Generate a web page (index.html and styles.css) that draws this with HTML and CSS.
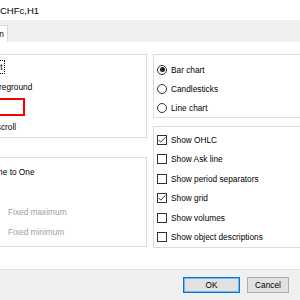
FILE: index.html
```html
<!DOCTYPE html>
<html lang="en">

<head>
    <meta charset="UTF-8">
    <title>CHFc,H1</title>
    <link rel="stylesheet" href="styles.css">
</head>

<body>

    <div class="titlebar"><span class="title">CHFc,H1</span></div>

    <div class="tabs">
        <div class="tab"><span>Common</span></div>
    </div>

    <div class="panel">
        <!-- columna izquierda, cortada por el borde de la ventana -->
        <div class="col col-left">
            <div class="group group-chart">
                <div class="row"><span class="box"></span><span class="label focus">Offline chart</span></div>
                <div class="row"><span class="box"></span><span class="label">Chart on foreground</span></div>
                <div class="row">
                    <span class="marked"><span class="box"></span><span class="label">Chart shift</span></span>
                </div>
                <div class="row"><span class="box"></span><span class="label">Chart autoscroll</span></div>
            </div>
            <div class="group group-scale">
                <div class="row"><span class="box"></span><span class="label">Scale fix One to One</span></div>
                <div class="row"><span class="box"></span><span class="label">Scale fix</span></div>
                <div class="row"><span class="label disabled fixed">Fixed maximum</span></div>
                <div class="row"><span class="label disabled fixed">Fixed minimum</span></div>
            </div>
        </div>

        <!-- columna derecha -->
        <div class="col col-right">
            <div class="group group-type">
                <div class="row"><span class="radio on"></span><span class="label">Bar chart</span></div>
                <div class="row"><span class="radio"></span><span class="label">Candlesticks</span></div>
                <div class="row"><span class="radio"></span><span class="label">Line chart</span></div>
            </div>
            <div class="group group-show">
                <div class="row">
                    <span class="box"><svg viewBox="0 0 10 10"><polyline points="1.5,4.8 3.8,7.2 8.3,2.3" /></svg></span>
                    <span class="label">Show OHLC</span>
                </div>
                <div class="row"><span class="box"></span><span class="label">Show Ask line</span></div>
                <div class="row"><span class="box"></span><span class="label">Show period separators</span></div>
                <div class="row">
                    <span class="box"><svg viewBox="0 0 10 10"><polyline points="1.5,4.8 3.8,7.2 8.3,2.3" /></svg></span>
                    <span class="label">Show grid</span>
                </div>
                <div class="row"><span class="box"></span><span class="label">Show volumes</span></div>
                <div class="row"><span class="box"></span><span class="label">Show object descriptions</span></div>
            </div>
        </div>
    </div>

    <div class="footer">
        <button class="btn btn-default">OK</button>
        <button class="btn">Cancel</button>
    </div>

</body>

</html>
```

FILE: styles.css
```css
body {
    margin: 0;
    width: 300px;
    height: 300px;
    overflow: hidden;
    background-color: #ffffff;
    font-family: 'Liberation Sans', Arial, sans-serif;
    font-size: 8.3px;
    color: #000000;
}

.titlebar {
    height: 20px;
    display: flex;
    align-items: center;
    font-size: 9.5px;
    white-space: nowrap;
}

.tabs {
    height: 22px;
    background-color: #f0f0f0;
    display: flex;
    align-items: flex-end;
}

.tab {
    width: 8px;
    height: 17px;
    box-sizing: border-box;
    background-color: #ffffff;
    border-top: 1px solid #d9d9d9;
    border-right: 1px solid #d9d9d9;
    display: flex;
    justify-content: flex-end;
    align-items: center;
    padding-right: 3px;
    overflow: hidden;
    white-space: nowrap;
}

.panel {
    height: 227px;
    box-sizing: border-box;
    padding-top: 12px;
    display: flex;
    gap: 6px;
    overflow: hidden;
}

.col {
    display: flex;
    flex-direction: column;
}

.col-left {
    flex: none;
    width: 207px;
    margin-left: -60px;
    gap: 19px;
}

.col-right {
    flex: 1;
    margin-right: -10px;
    gap: 8px;
}

.group {
    border: 1px solid #dcdcdc;
    padding-left: 3px;
    display: flex;
    flex-direction: column;
}

.group-chart {
    padding-top: 2px;
}

.group-scale {
    padding-top: 4px;
    padding-bottom: 4px;
}

.group-type {
    padding-top: 5px;
}

.group-type .row {
    height: 19px;
}

.group-show {
    padding-top: 3px;
}

.group-show .row {
    height: 19.5px;
}

.row {
    height: 20px;
    display: flex;
    align-items: center;
    gap: 4px;
    white-space: nowrap;
}

.box,
.radio {
    flex: none;
    width: 10px;
    height: 10px;
    box-sizing: border-box;
    border: 1px solid #333333;
    background-color: #ffffff;
    position: relative;
}

.box svg {
    position: absolute;
    top: -1px;
    left: -1px;
    width: 10px;
    height: 10px;
}

.box polyline {
    fill: none;
    stroke: #333333;
    stroke-width: 1;
}

.radio {
    border-radius: 50%;
}

.radio.on::after {
    content: '';
    position: absolute;
    top: 1.5px;
    left: 1.5px;
    width: 5px;
    height: 5px;
    border-radius: 50%;
    background-color: #222222;
}

.focus {
    outline: 1px dotted #000000;
    outline-offset: 1px;
}

.marked {
    display: flex;
    align-items: center;
    gap: 4px;
    height: 18px;
    box-sizing: border-box;
    margin-left: -5px;
    padding-left: 3px;
    padding-right: 27px;
    border: 2px solid #ff0000;
}

.disabled {
    color: #a0a0a0;
}

.fixed {
    margin-left: 64px;
}

.footer {
    height: 31px;
    box-sizing: border-box;
    background-color: #f0f0f0;
    border-top: 1px solid #dfdfdf;
    display: flex;
    justify-content: flex-end;
    align-items: flex-start;
    gap: 7px;
    padding: 7px 11px 0 0;
}

.btn {
    height: 16px;
    width: 42px;
    margin: 0;
    padding: 0;
    background-color: #e1e1e1;
    border: 1px solid #adadad;
    font-family: 'Liberation Sans', Arial, sans-serif;
    font-size: 8.3px;
    color: #000000;
}

.btn-default {
    width: 57px;
    border-color: #0078d7;
    box-shadow: inset 0 0 0 1px #7eb4ea;
}
```
